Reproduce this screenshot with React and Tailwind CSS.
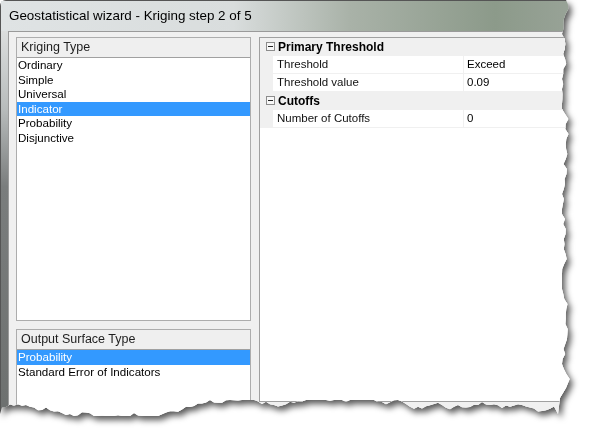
import React from 'react';

// torn paper edge, built once from a seeded random walk
function tornClip() {
  let s = 7;
  const rnd = () => {
    s = (s * 9301 + 49297) % 233280;
    return s / 233280;
  };
  const pts = ['0px 0px', '566px 0px'];
  let x = 568;
  for (let y = 4; y <= 380; y += 5) {
    x += (rnd() - 0.5) * 7;
    if (x < 562) x = 562;
    if (x > 578) x = 578;
    pts.push(`${x.toFixed(1)}px ${y}px`);
  }
  pts.push('566px 388px', '560px 398px', '558px 414px');
  let y = 404;
  for (let bx = 554; bx >= 0; bx -= 4) {
    y += (rnd() - 0.5) * 6;
    if (y < 400) y = 400;
    if (y > 416) y = 416;
    pts.push(`${bx}px ${y.toFixed(1)}px`);
  }
  pts.push('0px 414px');
  return `polygon(${pts.join(', ')})`;
}

const clip = tornClip();

const krigingTypes = ['Ordinary', 'Simple', 'Universal', 'Indicator', 'Probability', 'Disjunctive'];
const outputTypes = ['Probability', 'Standard Error of Indicators'];

const ListBox = ({ title, items, selected, className }) => (
  <div className={`flex flex-col border border-[#adadad] bg-white ${className}`}>
    <div className="h-[20px] flex items-center pl-[4px] bg-[#efefef] border-b border-[#a0a0a0] text-[12.5px] text-[#1e1e1e]">
      {title}
    </div>
    <div className="flex flex-col">
      {items.map((item) => (
        <div
          key={item}
          className={`h-[14.5px] leading-[14.5px] pl-[1px] text-[11.6px] ${
            item === selected ? 'bg-[#3399ff] text-white' : 'text-black'
          }`}
        >
          {item}
        </div>
      ))}
    </div>
  </div>
);

const MinusBox = () => (
  <div className="w-[9px] h-[9px] border border-[#8c8c8c] bg-[#f7f7f7] flex items-center justify-center">
    <div className="w-[5px] h-[1px] bg-[#222]" />
  </div>
);

const Category = ({ label }) => (
  <div className="h-[18px] flex items-center bg-[#f0f0f0] border-b border-[#f0f0f0]">
    <div className="w-[18px] flex justify-center pl-[2px]">
      <MinusBox />
    </div>
    <span className="text-[12px] font-bold text-black">{label}</span>
  </div>
);

const Prop = ({ name, value }) => (
  <div className="h-[18px] flex border-b border-[#f0f0f0]">
    <div className="w-[13px] bg-[#f0f0f0]" />
    <div className="w-[191px] flex items-center pl-[4px] text-[11.5px] text-[#111] border-r border-[#f0f0f0]">{name}</div>
    <div className="flex-1 flex items-center pl-[3px] text-[11.5px] text-black">{value}</div>
  </div>
);

export default function App() {
  return (
    <div className="w-[600px] h-[441px] bg-white overflow-hidden font-['Liberation_Sans',Arial,sans-serif]">
      <div className="[filter:drop-shadow(3px_4px_3px_rgba(0,0,0,0.65))]">
        <div
          style={{ clipPath: clip }}
          className="w-[582px] h-[420px] flex flex-col rounded-tl-[6px] border-t border-l border-[#555] bg-[#f0f0f0]"
        >
          {/* Title bar */}
          <div className="h-[30px] flex items-center pl-[8px] bg-[linear-gradient(90deg,#dfe3e4_0%,#d9dddd_40%,#a9b2a8_60%,#8c9a8a_85%,#9aa499_100%)]">
            <span className="text-[13.4px] text-black">Geostatistical wizard - Kriging step 2 of 5</span>
          </div>

          <div className="flex flex-1">
            {/* glass frame */}
            <div className="w-[7px] bg-[linear-gradient(180deg,#dcdede_0%,#b8bcbc_20%,#7a7d7d_40%,#6d706f_100%)]" />

            {/* client area */}
            <div className="flex-1 flex border-t border-l border-[#9a9a9a] bg-[#f0f0f0] pt-[5px] pl-[7px]">
              <div className="w-[235px] flex flex-col">
                <ListBox title="Kriging Type" items={krigingTypes} selected="Indicator" className="h-[284px]" />
                <ListBox title="Output Surface Type" items={outputTypes} selected="Probability" className="flex-1 mt-[8px]" />
              </div>

              <div className="ml-[8px] flex-1 flex flex-col">
                <div className="h-[365px] bg-white border-l border-t border-b border-[#a0a0a0]">
                  <Category label="Primary Threshold" />
                  <Prop name="Threshold" value="Exceed" />
                  <Prop name="Threshold value" value="0.09" />
                  <Category label="Cutoffs" />
                  <Prop name="Number of Cutoffs" value="0" />
                </div>
                <div className="flex-1 bg-[#f0f0f0]" />
              </div>
            </div>
          </div>
        </div>
      </div>
    </div>
  );
}
